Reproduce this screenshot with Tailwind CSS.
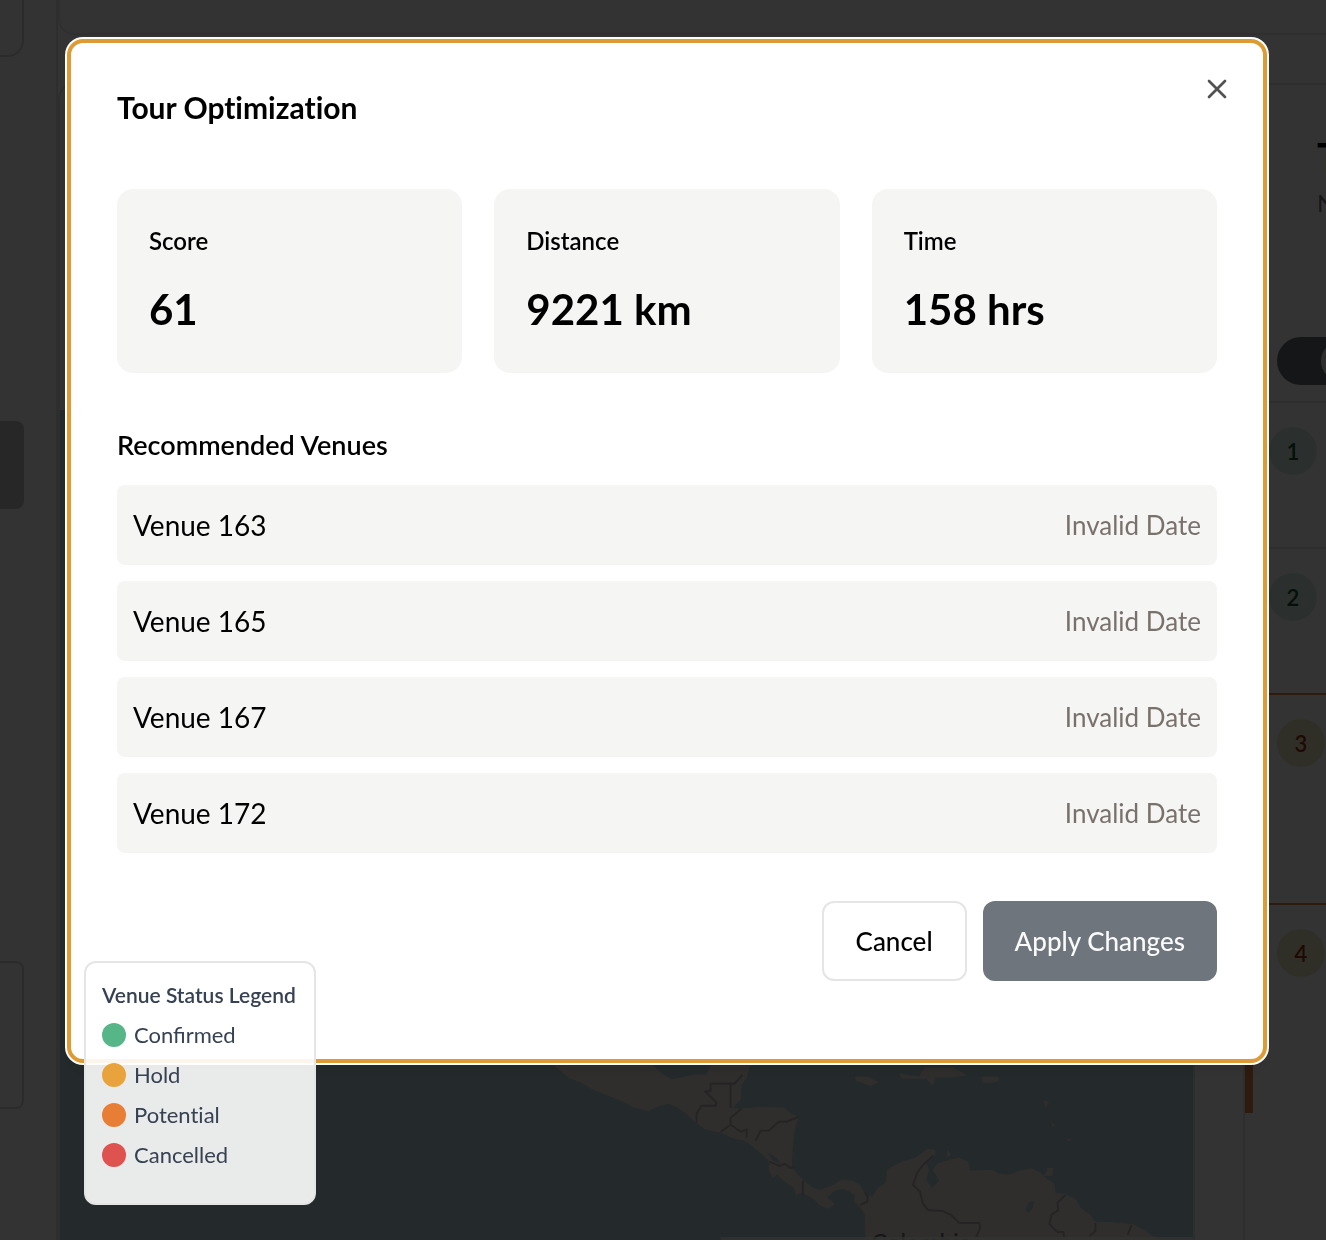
<!DOCTYPE html>
<html lang="en">
<head>
<meta charset="utf-8">
<meta name="viewport" content="width=device-width, initial-scale=1">
<title>Tour Optimization</title>
<script src="https://cdn.jsdelivr.net/npm/@tailwindcss/browser@4"></script>
</head>
<body class="bg-white font-['Lato',sans-serif] text-black">

<div class="flex h-screen overflow-hidden">
  <!-- Sidebar -->
  <aside class="w-[58px] shrink-0 border-r-2 border-neutral-200 pr-8">
    <div class="h-[57px] rounded-br-2xl border-r-2 border-b-2 border-neutral-300"></div>
    <div class="mt-[364px] h-[88px] rounded-r-lg bg-[#c4c4c4]"></div>
    <div class="mt-[452px] h-[148px] rounded-r-lg border-2 border-l-0 border-neutral-300"></div>
  </aside>

  <div class="flex min-w-0 flex-1 flex-col">
    <header class="h-[35px] shrink-0 rounded-bl-2xl border-b-2 border-l-2 border-[#e8e8e8]"></header>
    <div class="mt-12 flex min-h-0 flex-1">
      <!-- Map column -->
      <main class="relative mr-12 min-w-0 flex-1 rounded-tl-2xl border-2 border-b-0 border-neutral-200 pt-[325px]">
        <svg class="block h-full w-full bg-[#b4cdd7]" viewBox="60 410 1134 828" preserveAspectRatio="xMinYMin slice" aria-label="Map">
          <g fill="#ebe6dc">
            <path d="M555 1066L560 1070 567 1076 580 1081 590 1087 607 1094 620 1099 633 1106 647 1109 658 1104 667 1102 675 1105 685 1112 695 1121 703 1127 710 1129 720 1131 730 1136 743 1139 750 1144 760 1152 768 1160 767 1168 771 1176 775 1173 782 1179 792 1186 794 1193 801 1191 812 1197 818 1203 826 1207 833 1202 825 1195 834 1188 843 1187 853 1193 852 1199 859 1206 863 1213 864 1245H1165L1152 1235 1143 1229 1130 1222 1105 1220 1093 1220 1087 1212 1078 1206 1074 1198 1063 1192 1053 1191 1052 1182 1043 1176 1038 1171 1030 1167 1020 1168 1007 1173 997 1172 990 1168 968 1169 966 1160 957 1156 947 1158 935 1162 931 1168 937 1179 930 1186 924 1178 927 1168 924 1161 933 1153 933 1148 926 1147 913 1156 900 1160 885 1168 884 1181 876 1186 870 1195 863 1192 858 1183 850 1179 840 1178 830 1184 818 1188 811 1186 803 1180 796 1173 790 1165 791 1145 793 1127 797 1115 789 1112 783 1106 760 1105 738 1107 731 1106 739 1098 740 1083 745 1076 749 1062H710L705 1073 693 1073 670 1078 660 1072 650 1062H552Z"/>
            <path d="M853 1075l12 0 12 6-9 3-14-5zM897 1072l20 3 6-9h28l14 8-15 2-17 0-2 8-7-7-24 0zM980 1075h15l2 4-5 2h-12zM1041 1099l6 1-4 6zM1049 1119l3 5-2 1zM1045 1166l6 0-1 8-9 0 3-3zM945 1148l4 5-4 2zM1065 1137h3v2h-3z"/>
          </g>
          <g fill="#b4cdd7">
            <path d="M765 1150l10 6 4 6-8-3z"/>
            <path d="M1027 1200l5-1-2 8-4 4-3-3z"/>
          </g>
          <g fill="none" stroke="#bdaeb8" stroke-width="2">
            <path d="M741 1073l-8 9h-24v7l-5 1 11 11-1 3h-14l-5 8v9M729 1082v24M740 1107l-11 9v7l-10 7M729 1123l10 7 6-2v8M797 1115l-12 5h-8l-10 9h-8l-5 10M768 1160l10 4 5-2 5 4 5 0M801 1179v14M863 1190l3 6-1 4-7 3"/>
            <path d="M931 1154l-10 9-6 8-4 12 7 7 3 12 5 6 14 1 9 4 8 8h20l1 5-4 9M1063 1193l-8 8 1 7-7 5-2 9 8 8h6l1 6M1093 1221v8l-6 5M1129 1223l-4 10"/>
          </g>
          <text x="869" y="1250" font-size="24" fill="#6f6873">Colombia</text>
          <rect x="719" y="1235" width="475" height="10" fill="#fff" fill-opacity=".75"/>
        </svg>

        <!-- Legend floats above the dialog -->
        <section class="absolute bottom-[35px] left-6 z-50 h-[244px] w-[232px] rounded-xl border-2 border-neutral-200 bg-white/90 p-4 text-gray-700">
          <h2 class="text-[21px] leading-8 font-semibold whitespace-nowrap">Venue Status Legend</h2>
          <ul class="mt-2 flex flex-col gap-2 text-[22px] leading-8">
            <li class="flex items-center gap-2"><span class="size-6 rounded-full bg-[#56b687]"></span>Confirmed</li>
            <li class="flex items-center gap-2"><span class="size-6 rounded-full bg-[#e8a33d]"></span>Hold</li>
            <li class="flex items-center gap-2 [font-variant-ligatures:none]"><span class="size-6 rounded-full bg-[#e87d35]"></span>Potential</li>
            <li class="flex items-center gap-2"><span class="size-6 rounded-full bg-[#de524f]"></span>Cancelled</li>
          </ul>
        </section>
      </main>

      <!-- Tour stops panel -->
      <aside class="w-[83px] shrink-0 overflow-hidden border-t-2 border-l-2 border-neutral-200">
        <div class="h-[318px] border-b-2 border-neutral-200 pt-[52px]">
          <h2 class="pl-[72px] text-[40px] leading-10 font-bold">T</h2>
          <p class="mt-3 pl-[72px] text-2xl leading-7 text-stone-500">N</p>
          <button type="button" aria-label="Toggle view" class="mt-[120px] ml-8 flex h-12 w-[88px] items-center justify-end rounded-full bg-[#6c7078] p-1"><span class="size-10 rounded-full bg-neutral-200"></span></button>
        </div>
        <ol class="text-[22px] font-semibold">
          <li class="h-[146px] border-b-2 border-neutral-200 pt-6 pl-6"><span class="flex size-12 items-center justify-center rounded-full bg-[#d7ebde] text-[#14532d]">1</span></li>
          <li class="h-[146px] border-b-2 border-[#e08a45] pt-6 pl-6"><span class="flex size-12 items-center justify-center rounded-full bg-[#d7ebde] text-[#14532d]">2</span></li>
          <li class="h-[210px] border-b-2 border-l-8 border-[#e08a45] pt-6 pl-6"><span class="flex size-12 items-center justify-center rounded-full bg-[#ebe4c3] text-[#9a3412]">3</span></li>
          <li class="h-[208px] border-l-8 border-[#e08a45] pt-6 pl-6"><span class="flex size-12 items-center justify-center rounded-full bg-[#ebe4c3] text-[#9a3412]">4</span></li>
        </ol>
      </aside>
    </div>
  </div>
</div>

<!-- Dialog -->
<div class="fixed inset-0 z-40 bg-black/80 pt-[39px] pr-[59px] pl-[67px]">
  <div role="dialog" aria-modal="true" aria-labelledby="dialog-title" class="relative rounded-2xl border-4 border-[#dc9b35] bg-white px-[46px] pt-[46px] pb-[78px] shadow-lg ring-2 ring-white">
    <button type="button" aria-label="Close" class="absolute top-[30px] right-[30px] text-neutral-600">
      <svg class="size-8" viewBox="0 0 24 24" fill="none" stroke="currentColor" stroke-width="2" stroke-linecap="round" stroke-linejoin="round"><path d="M18 6 6 18M6 6l12 12"/></svg>
    </button>

    <h1 id="dialog-title" class="text-3xl leading-9 font-bold [font-variant-ligatures:none]">Tour Optimization</h1>

    <dl class="mt-16 grid grid-cols-3 gap-8">
      <div class="rounded-2xl bg-stone-100 p-8">
        <dt class="text-2xl leading-10 font-semibold">Score</dt>
        <dd class="mt-4 text-[42px] leading-[64px] font-bold">61</dd>
      </div>
      <div class="rounded-2xl bg-stone-100 p-8">
        <dt class="text-2xl leading-10 font-semibold">Distance</dt>
        <dd class="mt-4 text-[42px] leading-[64px] font-bold">9221 km</dd>
      </div>
      <div class="rounded-2xl bg-stone-100 p-8">
        <dt class="text-2xl leading-10 font-semibold">Time</dt>
        <dd class="mt-4 text-[42px] leading-[64px] font-bold">158 hrs</dd>
      </div>
    </dl>

    <h2 class="mt-12 text-[27px] leading-12 font-semibold">Recommended Venues</h2>
    <ul class="mt-4 flex flex-col gap-4 text-[28px]">
      <li class="flex h-20 items-center justify-between rounded-lg bg-stone-100 px-4">Venue 163<span class="text-[26px] text-stone-500">Invalid Date</span></li>
      <li class="flex h-20 items-center justify-between rounded-lg bg-stone-100 px-4">Venue 165<span class="text-[26px] text-stone-500">Invalid Date</span></li>
      <li class="flex h-20 items-center justify-between rounded-lg bg-stone-100 px-4">Venue 167<span class="text-[26px] text-stone-500">Invalid Date</span></li>
      <li class="flex h-20 items-center justify-between rounded-lg bg-stone-100 px-4">Venue 172<span class="text-[26px] text-stone-500">Invalid Date</span></li>
    </ul>

    <div class="mt-12 flex justify-end gap-4 text-[26px] font-medium">
      <button type="button" class="h-20 rounded-xl border-2 border-neutral-200 px-8">Cancel</button>
      <button type="button" class="h-20 rounded-xl bg-[#6e757c] px-8 text-neutral-50">Apply Changes</button>
    </div>
  </div>
</div>

</body>
</html>
